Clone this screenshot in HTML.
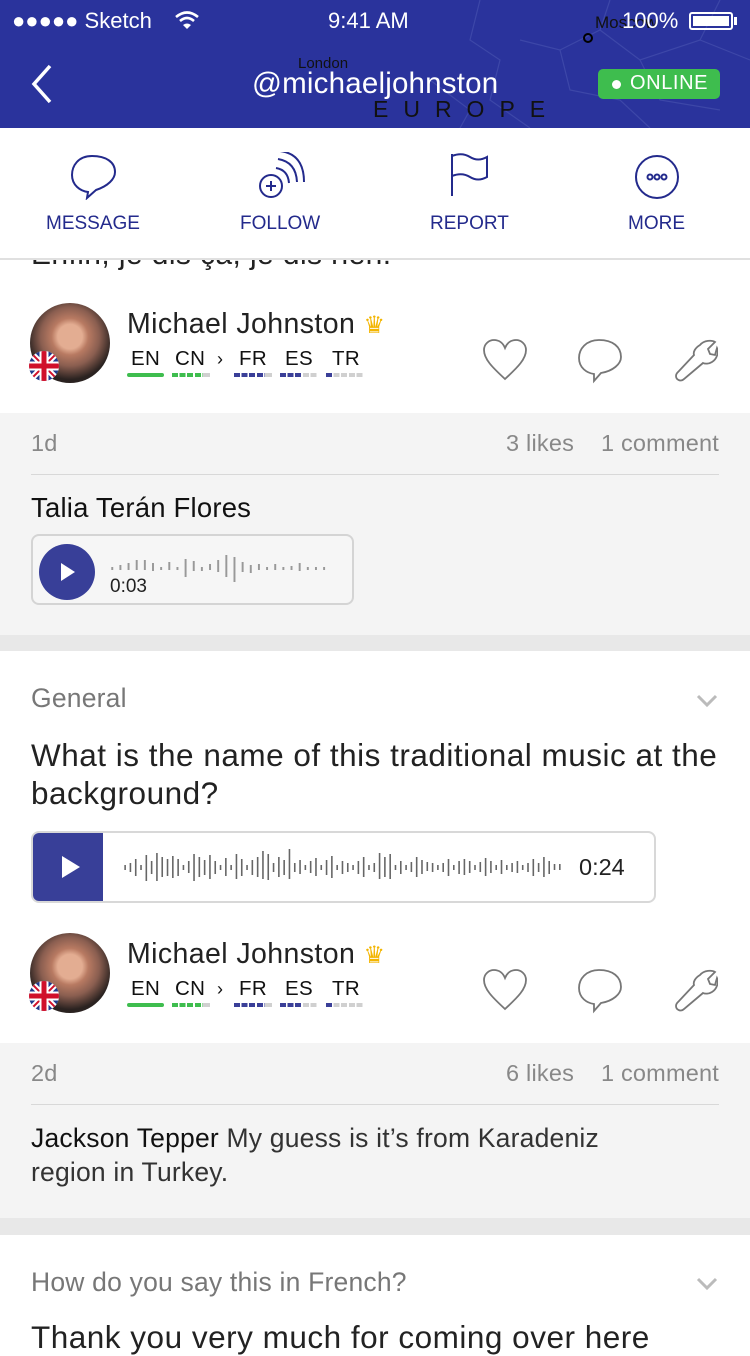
<!DOCTYPE html>
<html><head><meta charset="utf-8"><style>
*{margin:0;padding:0;box-sizing:border-box}
body{width:750px;height:1334px;overflow:hidden;position:relative;font-family:"Liberation Sans",sans-serif;background:#fff}
.abs{position:absolute}
.hdr{left:0;top:0;width:750px;height:128px;background:#2a339c;overflow:hidden}
.t{position:absolute;white-space:nowrap}
.gray{background:#f4f4f4}
.nm{font-size:28.5px;letter-spacing:0.4px;color:#222}
.lg{position:absolute;top:44px;font-size:20.5px;color:#111;letter-spacing:0.3px}
.meta{font-size:23.5px;color:#888;letter-spacing:0.2px}
</style></head><body>
<div class="abs hdr">
<svg width="750" height="128" style="position:absolute;left:0;top:0"><g stroke="#3d47a8" stroke-width="1.2" fill="none"><path d="M480 0 L470 40 L500 60 L490 100 L530 128"/><path d="M520 40 L560 50 L600 30 L640 60 L700 40 L750 60"/><path d="M560 50 L570 90 L620 100 L650 128"/><path d="M600 30 L610 0"/><path d="M640 60 L660 100 L720 110"/><path d="M700 40 L720 0"/><path d="M430 80 L470 110 L460 128"/></g><circle cx="588" cy="38" r="4" fill="none" stroke="#000" stroke-width="2"/></svg>
<div class="t" style="left:298px;top:55px;font-size:15px;color:#111">London</div>
<div class="t" style="left:373px;top:96px;font-size:23px;color:#111;letter-spacing:15px">EUROPE</div>
<div class="t" style="left:595px;top:13px;font-size:17px;color:#111">Moscow</div>
<div class="t" style="left:12px;top:8px;font-size:22px;color:#fff">●●●●● Sketch</div>
<svg class="abs" style="left:174px;top:10px" width="26" height="20" viewBox="0 0 26 20"><path d="M2 7 Q13 -2 24 7" stroke="#fff" stroke-width="2.6" fill="none"/><path d="M6 11 Q13 5 20 11" stroke="#fff" stroke-width="2.6" fill="none"/><path d="M13 19 L9 15 Q13 12 17 15Z" fill="#fff"/></svg>
<div class="t" style="left:328px;top:8px;font-size:22px;color:#fff">9:41 AM</div>
<div class="t" style="left:622px;top:8px;font-size:22px;color:#fff">100%</div>
<div class="abs" style="left:689px;top:12px;width:44px;height:18px;border:2px solid #fff;border-radius:3px;padding:2px"><div style="width:100%;height:100%;background:#fff"></div></div>
<div class="abs" style="left:734px;top:17px;width:3px;height:8px;background:#fff"></div>
<svg class="abs" style="left:30px;top:64px" width="24" height="40"><path d="M20 2 L4 20 L20 38" stroke="#fff" stroke-width="3.5" fill="none"/></svg>
<div class="t" style="left:252px;top:67px;font-size:29.5px;color:#fff;letter-spacing:0.2px">@michaeljohnston</div>
<div class="abs" style="left:598px;top:69px;width:122px;height:30px;background:#3ebd4e;border-radius:5px"></div>
<div class="abs" style="left:612px;top:80px;width:9px;height:9px;border-radius:50%;background:#fff"></div>
<div class="t" style="left:630px;top:72px;font-size:20px;color:#fff;letter-spacing:0.6px">ONLINE</div>
</div>
<div class="t" style="left:31px;top:238px;font-size:30px;color:#222;letter-spacing:0.4px">Enfin, je dis ça, je dis rien.</div>
<div class="abs" style="left:0;top:128px;width:750px;height:132px;background:#fff;border-bottom:2px solid #e0e0e0">
<svg class="abs" style="left:70px;top:26px" width="48" height="46" viewBox="0 0 48 46" fill="none" stroke="#232a8c" stroke-width="2"><path d="M22 2 C8 2 2 12 2 21 C2 31 10 37 18 38 L17 44 L26 36 C38 32 45 25 45 18 C45 8 36 2 22 2Z"/></svg>
<svg class="abs" style="left:256px;top:24px" width="52" height="48" fill="none" stroke="#232a8c" stroke-width="2"><circle cx="15" cy="34" r="11"/><path d="M15 29v10M10 34h10"/><path d="M20 16 Q32 18 33 31"/><path d="M22 7 Q40 10 41 30"/><path d="M24 -1 Q48 2 48 30"/></svg>
<svg class="abs" style="left:448px;top:24px" width="44" height="46" fill="none" stroke="#232a8c" stroke-width="2"><path d="M4 2 V44"/><path d="M4 4 Q14 0 22 5 Q30 10 39 5 V25 Q30 30 22 25 Q14 20 4 24"/></svg>
<svg class="abs" style="left:634px;top:26px" width="46" height="46" fill="none" stroke="#232a8c" stroke-width="2"><circle cx="23" cy="23" r="21"/><circle cx="16" cy="23" r="2.5"/><circle cx="23" cy="23" r="2.5"/><circle cx="30" cy="23" r="2.5"/></svg>
<div class="t" style="left:46px;top:85px;font-size:19px;color:#232a8c">MESSAGE</div>
<div class="t" style="left:240px;top:85px;font-size:19px;color:#232a8c">FOLLOW</div>
<div class="t" style="left:430px;top:85px;font-size:19px;color:#232a8c">REPORT</div>
<div class="t" style="left:628px;top:85px;font-size:19px;color:#232a8c">MORE</div>
</div>

<!-- author row 1 -->
<div class="abs" style="left:0;top:303px;width:750px;height:82px">
<div class="abs" style="left:30px;top:0;width:80px;height:80px;border-radius:50%;background:radial-gradient(circle at 50% 42%,#e3ad92 0 20%,#b87a62 30%,#8a5e50 48%,#2a2220 70%)"></div>
<div class="abs" style="left:29px;top:48px;width:30px;height:30px;border-radius:50%;background:#fff;overflow:hidden"><svg width="30" height="30"><rect width="30" height="30" fill="#1f3a8c"/><path d="M0 0L30 30M30 0L0 30" stroke="#fff" stroke-width="6"/><path d="M0 0L30 30M30 0L0 30" stroke="#d0102a" stroke-width="2"/><path d="M15 0V30M0 15H30" stroke="#fff" stroke-width="9"/><path d="M15 0V30M0 15H30" stroke="#d0102a" stroke-width="5"/></svg></div>
<div class="t nm" style="left:127px;top:5px">Michael Johnston <span style="color:#f3b500;font-size:24px">♛</span></div>
<div class="lg" style="left:131px">EN</div><div class="lg" style="left:175px">CN</div><div class="lg" style="left:217px;font-size:18px;top:46px">›</div><div class="lg" style="left:239px">FR</div><div class="lg" style="left:285px">ES</div><div class="lg" style="left:332px">TR</div>
<div class="abs" style="top:70px;left:127px;width:37px;height:4px;background:#3ebd4e;border-radius:2px"></div>
<div class="abs" style="top:70px;left:172px;width:38px;height:4px;background:repeating-linear-gradient(90deg,#3ebd4e 0 6px,transparent 6px 7.6px)"><div style="position:absolute;right:0;width:7px;height:4px;background:#d0d0d0"></div></div>
<div class="abs" style="top:70px;left:234px;width:38px;height:4px;background:repeating-linear-gradient(90deg,#3a3f98 0 6px,transparent 6px 7.6px)"><div style="position:absolute;right:0;width:7px;height:4px;background:#d0d0d0"></div></div>
<div class="abs" style="top:70px;left:280px;width:38px;height:4px;background:repeating-linear-gradient(90deg,#3a3f98 0 6px,transparent 6px 7.6px)"><div style="position:absolute;right:0;width:15px;height:4px;background:repeating-linear-gradient(90deg,#d0d0d0 0 6px,#fff 6px 7.6px)"></div></div>
<div class="abs" style="top:70px;left:326px;width:38px;height:4px;background:repeating-linear-gradient(90deg,#d0d0d0 0 6px,transparent 6px 7.6px)"><div style="position:absolute;left:0;width:6px;height:4px;background:#3a3f98"></div></div>
<svg class="abs" style="left:482px;top:36px" width="46" height="42" fill="none" stroke="#777" stroke-width="1.8"><path d="M23 40 C10 28 2 20 2 11 C2 5 7 1 12 1 C17 1 21 4 23 9 C25 4 29 1 34 1 C39 1 44 5 44 11 C44 20 36 28 23 40Z"/></svg>
<svg class="abs" style="left:577px;top:35px" width="46" height="46" fill="none" stroke="#777" stroke-width="1.8"><path d="M22 2 C9 2 2 11 2 20 C2 30 10 35 17 36 L17 43 L24 35 C36 33 44 26 44 19 C44 9 36 2 22 2Z"/></svg>
<svg class="abs" style="left:674px;top:36px" width="44" height="44" fill="none" stroke="#777" stroke-width="1.8"><path d="M26 6 C30 1 38 1 41 3 L34 10 L36 15 L41 16 L43 9 C45 13 43 20 38 23 C35 25 31 25 29 24 L10 40 C7 43 2 41 2 37 C2 35 3 34 5 32 L20 16 C19 13 21 9 26 6Z"/></svg>
</div>

<div class="abs gray" style="left:0;top:413px;width:750px;height:222px">
<div class="t meta" style="left:31px;top:17px">1d</div>
<div class="t meta" style="right:31px;top:17px">3 likes&nbsp;&nbsp;&nbsp;&nbsp;1 comment</div>
<div class="abs" style="left:31px;top:61px;width:688px;height:1px;background:#d8d8d8"></div>
<div class="t" style="left:31px;top:79px;font-size:27.5px;color:#111;letter-spacing:0.2px">Talia Terán Flores</div>
<div class="abs" style="left:31px;top:121px;width:323px;height:71px;border:2px solid #d4d4d4;border-radius:8px;background:#f6f6f6">
<div class="abs" style="left:6px;top:8px;width:56px;height:56px;border-radius:50%;background:#383f98"></div>
<svg class="abs" style="left:27px;top:26px" width="16" height="20"><path d="M1 1 L15 10 L1 19Z" fill="#fff"/></svg>
<svg class="abs" style="left:76px;top:14px" width="220" height="36" viewBox="0 0 135 36" preserveAspectRatio="none" stroke="#999" stroke-width="1.2"><path d="M2 17v3M7 15v5M12 13v7M17 10v10M22 10v10M27 13v8M32 17v3M37 12v8M42 17v3M47 9v18M52 11v10M57 17v4M62 14v6M67 10v12M72 5v22M77 7v25M82 12v10M87 15v8M92 14v6M97 17v3M102 14v6M107 17v3M112 16v4M117 13v8M122 17v3M127 17v3M132 17v3"/></svg>
<div class="t" style="left:77px;top:40px;font-size:19px;color:#222">0:03</div>
</div>
</div>
<div class="abs" style="left:0;top:635px;width:750px;height:16px;background:#e8e8e8"></div>

<div class="t" style="left:31px;top:683px;font-size:26.5px;color:#777;letter-spacing:0.2px">General</div>
<svg class="abs" style="left:696px;top:694px" width="22" height="14"><path d="M2 2 L11 11 L20 2" stroke="#bbb" stroke-width="3" fill="none"/></svg>
<div class="t" style="left:31px;top:736px;font-size:31.5px;line-height:38px;color:#222;letter-spacing:0.5px">What is the name of this traditional music at the</div>
<div class="t" style="left:31px;top:774px;font-size:31.5px;line-height:38px;color:#222;letter-spacing:0.5px">background?</div>
<div class="abs" style="left:31px;top:831px;width:625px;height:72px;border:2px solid #d8d8d8;border-radius:8px;overflow:hidden;background:#fff">
<div class="abs" style="left:-2px;top:-2px;width:72px;height:72px;background:#383f98"></div>
<svg class="abs" style="left:28px;top:22px" width="20" height="24"><path d="M1 1 L19 12 L1 23Z" fill="#fff"/></svg>
<svg class="abs" style="left:90px;top:12px" width="440" height="46" viewBox="0 0 415 46" preserveAspectRatio="none" stroke="#666" stroke-width="1.5"><path d="M2 20v5M7 18v9M12 14v17M17 20v5M22 10v26M27 16v13M32 8v28M37 12v20M42 14v17M47 11v22M52 14v17M57 20v5M62 16v12M67 9v27M72 12v20M77 15v15M82 10v24M87 16v13M92 20v5M97 13v18M102 20v5M107 9v25M112 14v17M117 20v5M122 15v15M127 12v20M132 6v28M137 9v26M142 18v9M147 12v20M152 15v15M157 4v30M162 18v9M167 15v14M172 20v5M177 16v12M182 13v18M187 20v5M192 15v15M197 11v22M202 20v5M207 16v13M212 18v9M217 20v5M222 16v13M227 12v20M232 20v5M237 18v9M242 8v26M247 12v20M252 9v25M257 20v5M262 16v13M267 20v5M272 17v10M277 12v20M282 15v14M287 17v9M292 18v9M297 20v5M302 18v9M307 14v17M312 20v5M317 16v13M322 14v16M327 16v12M332 20v5M337 17v10M342 13v18M347 16v12M352 20v5M357 15v14M362 20v5M367 18v9M372 16v12M377 20v5M382 18v9M387 14v17M392 18v9M397 12v20M402 16v13M407 19v6M412 19v6"/></svg>
<div class="t" style="left:546px;top:21px;font-size:23.5px;color:#222">0:24</div>
</div>

<!-- author row 2 -->
<div class="abs" style="left:0;top:933px;width:750px;height:82px">
<div class="abs" style="left:30px;top:0;width:80px;height:80px;border-radius:50%;background:radial-gradient(circle at 50% 42%,#e3ad92 0 20%,#b87a62 30%,#8a5e50 48%,#2a2220 70%)"></div>
<div class="abs" style="left:29px;top:48px;width:30px;height:30px;border-radius:50%;background:#fff;overflow:hidden"><svg width="30" height="30"><rect width="30" height="30" fill="#1f3a8c"/><path d="M0 0L30 30M30 0L0 30" stroke="#fff" stroke-width="6"/><path d="M0 0L30 30M30 0L0 30" stroke="#d0102a" stroke-width="2"/><path d="M15 0V30M0 15H30" stroke="#fff" stroke-width="9"/><path d="M15 0V30M0 15H30" stroke="#d0102a" stroke-width="5"/></svg></div>
<div class="t nm" style="left:127px;top:5px">Michael Johnston <span style="color:#f3b500;font-size:24px">♛</span></div>
<div class="lg" style="left:131px">EN</div><div class="lg" style="left:175px">CN</div><div class="lg" style="left:217px;font-size:18px;top:46px">›</div><div class="lg" style="left:239px">FR</div><div class="lg" style="left:285px">ES</div><div class="lg" style="left:332px">TR</div>
<div class="abs" style="top:70px;left:127px;width:37px;height:4px;background:#3ebd4e;border-radius:2px"></div>
<div class="abs" style="top:70px;left:172px;width:38px;height:4px;background:repeating-linear-gradient(90deg,#3ebd4e 0 6px,transparent 6px 7.6px)"><div style="position:absolute;right:0;width:7px;height:4px;background:#d0d0d0"></div></div>
<div class="abs" style="top:70px;left:234px;width:38px;height:4px;background:repeating-linear-gradient(90deg,#3a3f98 0 6px,transparent 6px 7.6px)"><div style="position:absolute;right:0;width:7px;height:4px;background:#d0d0d0"></div></div>
<div class="abs" style="top:70px;left:280px;width:38px;height:4px;background:repeating-linear-gradient(90deg,#3a3f98 0 6px,transparent 6px 7.6px)"><div style="position:absolute;right:0;width:15px;height:4px;background:repeating-linear-gradient(90deg,#d0d0d0 0 6px,#fff 6px 7.6px)"></div></div>
<div class="abs" style="top:70px;left:326px;width:38px;height:4px;background:repeating-linear-gradient(90deg,#d0d0d0 0 6px,transparent 6px 7.6px)"><div style="position:absolute;left:0;width:6px;height:4px;background:#3a3f98"></div></div>
<svg class="abs" style="left:482px;top:36px" width="46" height="42" fill="none" stroke="#777" stroke-width="1.8"><path d="M23 40 C10 28 2 20 2 11 C2 5 7 1 12 1 C17 1 21 4 23 9 C25 4 29 1 34 1 C39 1 44 5 44 11 C44 20 36 28 23 40Z"/></svg>
<svg class="abs" style="left:577px;top:35px" width="46" height="46" fill="none" stroke="#777" stroke-width="1.8"><path d="M22 2 C9 2 2 11 2 20 C2 30 10 35 17 36 L17 43 L24 35 C36 33 44 26 44 19 C44 9 36 2 22 2Z"/></svg>
<svg class="abs" style="left:674px;top:36px" width="44" height="44" fill="none" stroke="#777" stroke-width="1.8"><path d="M26 6 C30 1 38 1 41 3 L34 10 L36 15 L41 16 L43 9 C45 13 43 20 38 23 C35 25 31 25 29 24 L10 40 C7 43 2 41 2 37 C2 35 3 34 5 32 L20 16 C19 13 21 9 26 6Z"/></svg>
</div>

<div class="abs gray" style="left:0;top:1043px;width:750px;height:175px">
<div class="t meta" style="left:31px;top:17px">2d</div>
<div class="t meta" style="right:31px;top:17px">6 likes&nbsp;&nbsp;&nbsp;&nbsp;1 comment</div>
<div class="abs" style="left:31px;top:61px;width:688px;height:1px;background:#d8d8d8"></div>
<div class="t" style="left:31px;top:78px;font-size:26.5px;line-height:34px;color:#333;letter-spacing:0.2px"><span style="color:#111">Jackson Tepper</span> My guess is it’s from Karadeniz</div>
<div class="t" style="left:31px;top:112px;font-size:26.5px;line-height:34px;color:#333;letter-spacing:0.2px">region in Turkey.</div>
</div>
<div class="abs" style="left:0;top:1218px;width:750px;height:17px;background:#e8e8e8"></div>
<div class="t" style="left:31px;top:1267px;font-size:26.5px;color:#777;letter-spacing:0.2px">How do you say this in French?</div>
<svg class="abs" style="left:696px;top:1277px" width="22" height="14"><path d="M2 2 L11 11 L20 2" stroke="#bbb" stroke-width="3" fill="none"/></svg>
<div class="t" style="left:31px;top:1319px;font-size:31.5px;color:#222;letter-spacing:0.5px">Thank you very much for coming over here</div>
</body></html>
